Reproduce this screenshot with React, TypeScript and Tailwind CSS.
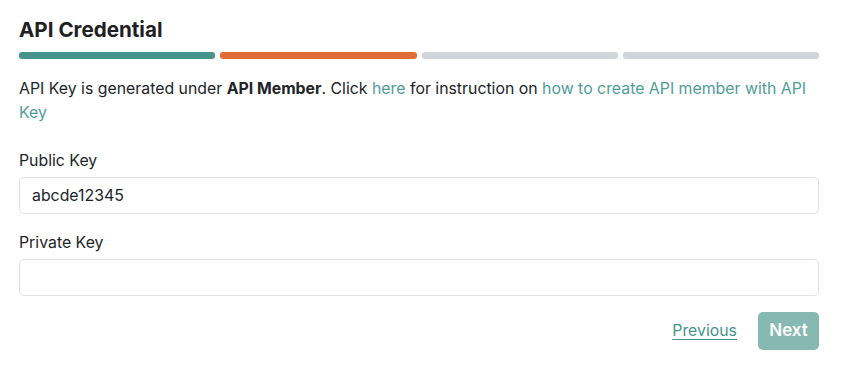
export default function App() {
    const steps = ["bg-[#45948a]", "bg-[#e16c38]", "bg-[#d1d5db]", "bg-[#d1d5db]"];

    return (
        <div className="min-h-screen bg-white pl-[19px] pt-[17px] text-[#1f2328]" style={{ fontFamily: "Inter, 'Noto Sans', sans-serif" }}>
            <div className="w-[800px]">
                <h2 className="text-[20.6px] font-bold leading-[25px] text-[#1f2023]">API Credential</h2>

                {/* step progress */}
                <div className="mt-[10px] grid grid-cols-4 gap-[5px]">
                    {steps.map((c, i) => (
                        <div key={i} className={`h-[7px] rounded-[3px] ${c}`} />
                    ))}
                </div>

                <p className="mt-[18px] text-[15.85px] leading-[24px] text-[#212529]">
                    API Key is generated under <span className="font-bold">API Member</span>. Click{" "}
                    <a className="text-[#4f9d97]">here</a> for instruction on{" "}
                    <a className="text-[#4f9d97]">how to create API member with API Key</a>
                </p>

                <div className="mt-[24px]">
                    <label className="block text-[15.85px] leading-[24px] text-[#212529]">Public Key</label>
                    <div className="mt-[4px] flex h-[37px] items-center rounded-[5px] border border-[#dee2e6] px-[12px] text-[15.85px] text-[#212529]">
                        abcde12345
                    </div>
                </div>

                <div className="mt-[17px]">
                    <label className="block text-[15.85px] leading-[24px] text-[#212529]">Private Key</label>
                    <div className="mt-[4px] h-[37px] rounded-[5px] border border-[#dee2e6]" />
                </div>

                <div className="mt-[16px] flex items-center justify-end gap-[21px]">
                    <a className="text-[15.85px] text-[#45948a] underline underline-offset-[3px]">Previous</a>
                    <button className="h-[38px] w-[61px] rounded-[5px] bg-[#86b9b2] text-[17px] font-semibold text-white">
                        Next
                    </button>
                </div>
            </div>
        </div>
    );
}
